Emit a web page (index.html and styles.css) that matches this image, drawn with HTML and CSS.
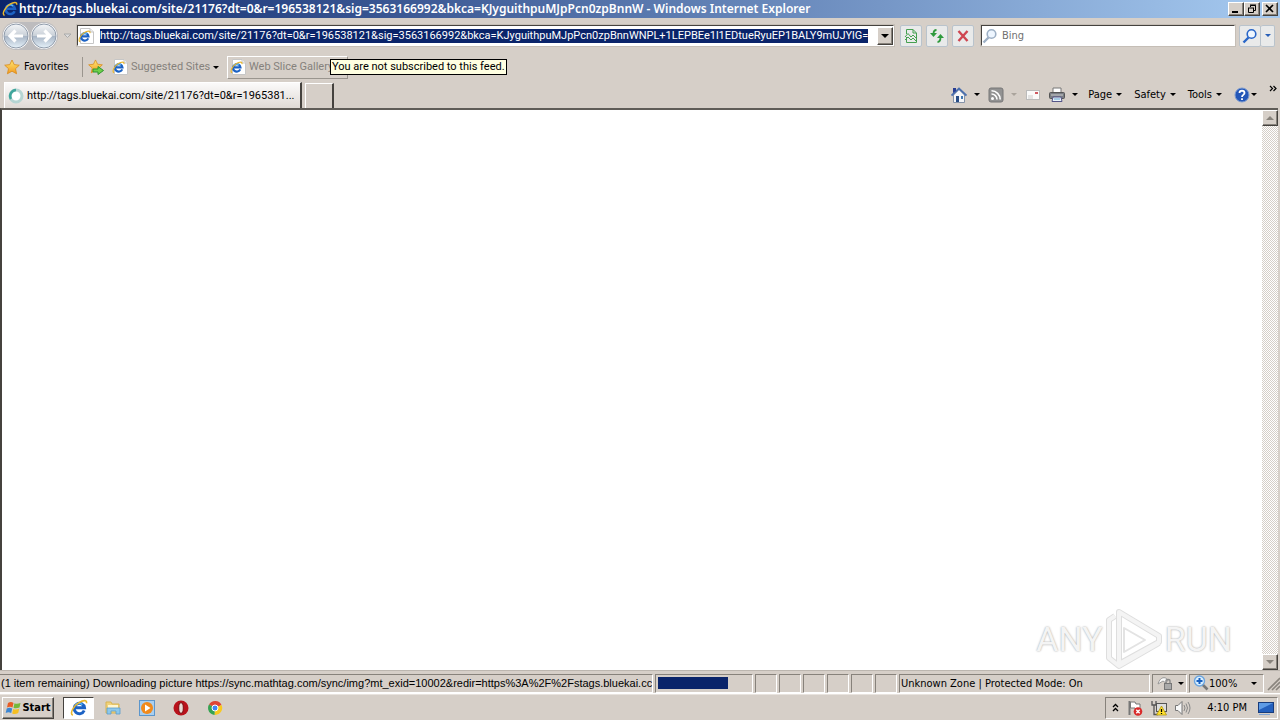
FILE: index.html
```html
<!DOCTYPE html>
<html lang="en">
<head>
<meta charset="utf-8">
<title>Windows Internet Explorer</title>
<link rel="stylesheet" href="styles.css">
</head>
<body>
<svg class="defs" aria-hidden="true">
  <defs>
    <linearGradient id="orb" x1="0" y1="0" x2="0" y2="1"><stop offset="0" stop-color="#f4f6f8"/><stop offset=".48" stop-color="#c9d0d8"/><stop offset=".52" stop-color="#a9b6c6"/><stop offset="1" stop-color="#e6f2fa"/></linearGradient>
    <linearGradient id="gold" x1="0" y1="0" x2="0" y2="1"><stop offset="0" stop-color="#ffe873"/><stop offset="1" stop-color="#f29a1f"/></linearGradient>
    <symbol id="e" viewBox="0 0 16 16">
      <path d="M12.6 10.2A4.6 4.6 0 1 1 12.900 7.800H5" fill="none" stroke="#1c62c4" stroke-width="2.600"/>
      <path d="M4.800 5.500A4.600 4.600 0 0 1 11 5" fill="none" stroke="#54b4f2" stroke-width="1.400"/>
      <path d="M2.500 14.500C-.5 13 3 6 8 3.200C11.500 1 15.500 .5 14.600 3.800" fill="none" stroke="#e9b72c" stroke-width="1.400"/>
    </symbol>
    <symbol id="page-e" viewBox="0 0 16 16">
      <path d="M2.500 .5H12L15.500 4V15.500H2.500Z" fill="#fff" stroke="#c6c6c6"/>
      <path d="M12 .5V4H15.500" fill="#eee" stroke="#c6c6c6"/>
      <use href="#e" x="0" y="2" width="13" height="13"/>
    </symbol>
    <symbol id="star" viewBox="0 0 16 16"><path d="M8 1L10.200 5.600L15.300 6.200L11.500 9.700L12.600 14.800L8 12.200L3.400 14.800L4.500 9.700L.7 6.200L5.800 5.600Z" fill="url(#gold)" stroke="#d88a1c" stroke-width=".8"/></symbol>
    <symbol id="lens" viewBox="0 0 16 16"><path d="M6.500 9.500L1.500 14.500" stroke="currentColor" stroke-width="2.400"/><circle cx="9.500" cy="6" r="4.300" fill="#eef6ff" stroke="currentColor" stroke-width="1.600"/></symbol>
  </defs>
</svg>

<header class="title-bar">
  <svg class="icon"><use href="#e"/></svg>
  <h1 class="title">http://tags.bluekai.com/site/21176?dt=0&amp;r=196538121&amp;sig=3563166992&amp;bkca=KJyguithpuMJpPcn0zpBnnW - Windows Internet Explorer</h1>
  <div class="window-buttons">
    <button class="win-button" aria-label="Minimize"><svg width="12" height="10"><path d="M2 8H8" stroke="#000" stroke-width="2"/></svg></button>
    <button class="win-button" aria-label="Restore"><svg width="12" height="10"><path d="M4.500 3V1.500H9.500V6.500H8M4 1H10M2 4H8M2.500 4V8.500H7.500V4" fill="none" stroke="#000"/></svg></button>
    <button class="win-button close" aria-label="Close"><svg width="12" height="10"><path d="M2 1L9 8M9 1L2 8" stroke="#000" stroke-width="1.600"/></svg></button>
  </div>
</header>

<nav class="nav-bar">
  <div class="travel">
    <button class="orb" aria-label="Back"><svg width="26" height="26" viewBox="0 0 26 26"><circle cx="13" cy="13" r="12" fill="url(#orb)" stroke="#8f9bab"/><path d="M20 13H7M12.500 7.500L7 13L12.500 18.500" fill="none" stroke="#fff" stroke-width="3.200"/></svg></button>
    <button class="orb" aria-label="Forward"><svg width="26" height="26" viewBox="0 0 26 26"><circle cx="13" cy="13" r="12" fill="url(#orb)" stroke="#8f9bab"/><path d="M6 13H19M13.500 7.500L19 13L13.500 18.500" fill="none" stroke="#fff" stroke-width="3.200"/></svg></button>
  </div>
  <button class="plain history" aria-label="Recent pages"><svg width="9" height="6"><path d="M1 1H8L4.500 4.500Z" fill="#ddd" stroke="#aaa"/></svg></button>
  <div class="address">
    <svg class="icon"><use href="#page-e"/></svg>
    <input class="address-input" type="text" aria-label="Address" value="http://tags.bluekai.com/site/21176?dt=0&amp;r=196538121&amp;sig=3563166992&amp;bkca=KJyguithpuMJpPcn0zpBnnWNPL+1LEPBEe1l1EDtueRyuEP1BALY9mUJYlG=">
    <button class="drop" aria-label="Show address list"><i class="caret big"></i></button>
  </div>
  <div class="tools">
    <button class="tool" aria-label="Compatibility view"><svg width="16" height="16"><path d="M3.500 1.500H10L13.500 5V14.500H3.500V9M3.500 6V1.500M10 1.500V5H13M2 9L5 5.500L8 9L10 7L14 11M2 12L5 9L8 12L10 10L13 13" fill="none" stroke="#45a050"/></svg></button>
    <button class="tool" aria-label="Refresh"><svg width="16" height="16"><path d="M7.500 2C5 2 4.500 4 4.500 6M8.500 14C11 14 11.500 12 11.500 9" fill="none" stroke="#2f9a3d" stroke-width="1.800"/><path d="M1 5H8L4.500 9ZM8 10H15L11.500 6Z" fill="#2f9a3d"/></svg></button>
    <button class="tool" aria-label="Stop"><svg width="16" height="16"><path d="M3.500 3L12.500 13M12.500 3L3.500 13" stroke="#cf4550" stroke-width="2.400"/></svg></button>
  </div>
  <div class="search"><svg class="icon pale"><use href="#lens"/></svg><input class="search-input" type="text" placeholder="Bing" aria-label="Search"></div>
  <div class="search-buttons">
    <button class="tool" aria-label="Search"><svg class="icon blue"><use href="#lens"/></svg></button>
    <button class="tool slim" aria-label="Search options"><i class="caret blue"></i></button>
  </div>
</nav>

<div class="favorites">
  <button class="plain fav"><svg class="icon"><use href="#star"/></svg>Favorites</button>
  <button class="plain add" aria-label="Add to favorites bar"><svg class="icon" viewBox="0 0 16 16"><use href="#star" width="15" height="15"/><path d="M5 10H10V7.500L15.500 11.500L10 15.500V13H5Z" fill="#6ed04a" stroke="#2f942e"/></svg></button>
  <button class="plain link suggested"><svg class="icon"><use href="#page-e"/></svg>Suggested Sites<i class="caret"></i></button>
  <div class="slice">
    <button class="plain link raised"><svg class="icon"><use href="#page-e"/></svg>Web Slice Gallery</button>
    <div class="tooltip" role="tooltip">You are not subscribed to this feed.</div>
  </div>
</div>

<div class="tab-row">
  <button class="tab"><svg class="icon" viewBox="0 0 16 16"><circle cx="8" cy="8" r="6" fill="#fff" stroke="#b5d5d3" stroke-width="3"/><path d="M8 2A6 6 0 0 0 3 11" fill="none" stroke="#3fa69c" stroke-width="2.600"/></svg><span class="tab-label">http://tags.bluekai.com/site/21176?dt=0&amp;r=1965381...</span></button>
  <button class="new-tab" aria-label="New tab"></button>
  <div class="commands">
    <button class="plain command" aria-label="Home"><svg class="icon" viewBox="0 0 16 16"><path d="M2.500 8V15.500H13.500V8L8 2.500Z" fill="#f5f6f8" stroke="#8593a8"/><path d="M.5 8.500L8 1.500L15.500 8.500" fill="none" stroke="#4a6fae" stroke-width="1.800"/><path d="M2 1H5V4L2 6Z" fill="#293e93"/><path d="M5 9H8V15H5Z" fill="#284d86"/><path d="M10 9H12V12H10Z" fill="#4179b4"/></svg><i class="caret"></i></button>
    <button class="plain command" aria-label="Feeds"><svg class="icon" viewBox="0 0 16 16"><rect x="1" y="1" width="14" height="14" rx="2" fill="#929292" stroke="#777"/><circle cx="4.500" cy="11.500" r="1.500" fill="#fff"/><path d="M3.500 7A5.500 5.500 0 0 1 9 12.500M3.500 3.800A8.700 8.700 0 0 1 12.200 12.500" fill="none" stroke="#fff" stroke-width="1.600"/></svg><i class="caret off"></i></button>
    <button class="plain command" aria-label="Read mail"><svg class="icon" viewBox="0 0 16 16"><rect x="1.500" y="3.500" width="13" height="9" fill="#fafafa" stroke="#bbb"/><path d="M10 5H13V7H10Z" fill="#cf5a62"/><path d="M3 9H8M3 11H8" stroke="#ccc"/></svg></button>
    <button class="plain command print" aria-label="Print"><svg class="icon" viewBox="0 0 16 16"><path d="M4 1H12V6H4Z" fill="#fff" stroke="#777"/><rect x=".5" y="5.500" width="15" height="6" rx="1" fill="#797d83" stroke="#555"/><path d="M2 8H14" stroke="#d0d0d0"/><path d="M4 10H12L13 14.500H3Z" fill="#e9f3fa" stroke="#558"/><path d="M5 12H11" stroke="#62a5d0"/></svg><i class="caret"></i></button>
    <button class="plain command word">Page<i class="caret"></i></button>
    <button class="plain command word">Safety<i class="caret"></i></button>
    <button class="plain command word">Tools<i class="caret"></i></button>
    <button class="plain command help" aria-label="Help"><svg class="icon" viewBox="0 0 16 16"><circle cx="8" cy="8" r="7" fill="#2457b8" stroke="#7c9bd0"/><path d="M5.500 6C5.500 3 10.500 3 10.500 6C10.500 8 8 7.800 8 10M8 11.200V13" fill="none" stroke="#fff" stroke-width="1.800"/></svg><i class="caret"></i></button>
    <button class="plain more" aria-label="More commands"><svg width="8" height="7"><path d="M1 1L3.500 3.500L1 6M4.500 1L7 3.500L4.500 6" fill="none" stroke="#000" stroke-width="1.200"/></svg></button>
  </div>
</div>

<main class="viewport">
  <div class="document"></div>
  <div class="scrollbar">
    <button class="scroll-button" aria-label="Scroll up"><i class="caret up gray"></i></button>
    <button class="scroll-button" aria-label="Scroll down"><i class="caret big gray"></i></button>
  </div>
  <div class="watermark">
    <span>ANY</span>
    <svg width="58" height="62" viewBox="0 0 58 62"><g fill="none" stroke-linejoin="round"><path d="M10 8L4 12V50L14 58L54 35M14 4L54 28V34L14 56Z" stroke="#dedede" stroke-width="6"/><path d="M10 8L4 12V50L14 58L54 35M14 4L54 28V34L14 56Z" stroke="#f4f4f4" stroke-width="4"/><path d="M19 20V44L40 32Z" fill="#fff" stroke="#e3e3e3" stroke-width="2"/></g></svg>
    <span>RUN</span>
  </div>
</main>

<footer class="status">
  <div class="pane message">(1 item remaining) Downloading picture https://sync.mathtag.com/sync/img?mt_exid=10002&amp;redir=https%3A%2F%2Fstags.bluekai.cc</div>
  <div class="pane progress" role="progressbar" aria-label="Loading"><div class="progress-fill"></div></div>
  <div class="pane cell"></div><div class="pane cell"></div><div class="pane cell"></div><div class="pane cell"></div><div class="pane cell"></div><div class="pane cell"></div>
  <div class="pane zone">Unknown Zone | Protected Mode: On</div>
  <button class="pane privacy" aria-label="Privacy"><svg class="icon" viewBox="0 0 16 16"><path d="M1 9C3 2 8 1 11 5L9 8L6 6Z" fill="#fafafa" stroke="#999"/><rect x="7.500" y="8.500" width="7" height="6" fill="#aaa" stroke="#777"/><path d="M9 8V6C9 4 13 4 13 6V8" fill="none" stroke="#888" stroke-width="1.400"/></svg><i class="caret"></i></button>
  <button class="pane zoom"><svg class="icon" viewBox="0 0 16 16"><path d="M9 9L14.500 14.500" stroke="#777" stroke-width="2.600"/><circle cx="6.500" cy="6" r="5" fill="#d9efff" stroke="#6ca5df" stroke-width="1.400"/><path d="M6.500 3V9M3.500 6H9.500" stroke="#175fc0" stroke-width="2"/></svg><span class="percent">100%</span><i class="caret"></i></button>
  <svg class="grip" width="14" height="16"><path d="M2 15L14 3M6 15L14 7M10 15L14 11" stroke="#8a857e" stroke-width="1.600"/></svg>
</footer>

<div class="taskbar">
  <button class="start"><svg class="icon" viewBox="0 0 16 16"><path d="M3 3Q6 1 8.500 3L7.500 7.500Q5 6 2 7.500Z" fill="#e85c25"/><path d="M9.500 3.300Q12 4.500 15.500 3L14.500 7.500Q11 9 8.500 7.800Z" fill="#75b83a"/><path d="M1.700 8.500Q4.500 7 7.200 8.500L6.200 13Q3.500 11.500 .7 13Z" fill="#3c86d3"/><path d="M8.200 9Q11 10.200 14.200 8.700L13.200 13Q10 14.800 7.200 13.400Z" fill="#f5bf22"/></svg>Start</button>
  <div class="launchers">
    <button class="task active" aria-label="Internet Explorer"><svg class="icon"><use href="#e"/></svg></button>
    <button class="task" aria-label="Explorer"><svg class="icon" viewBox="0 0 16 16"><path d="M1 2H6L7 4H14V13H1Z" fill="#f1d27a" stroke="#d8b452"/><path d="M3 5H13V10H3Z" fill="#fff6cf"/><path d="M2 8H15V14H11V11H6V14H2Z" fill="#8cc8ec" stroke="#5b9ccb" stroke-width=".8"/></svg></button>
    <button class="task" aria-label="Media Player"><svg class="icon" viewBox="0 0 16 16"><rect x=".5" y=".5" width="15" height="15" fill="#a9cff0" stroke="#5c96cc"/><circle cx="8" cy="8" r="6" fill="#f18a1c"/><path d="M6 4.500L11.500 8L6 11.500Z" fill="#fff"/></svg></button>
    <button class="task" aria-label="Opera"><svg class="icon" viewBox="0 0 16 16"><circle cx="8" cy="8" r="7.500" fill="#b8121b"/><ellipse cx="8" cy="8" rx="2.300" ry="5.300" fill="#e8dcd6" stroke="#7b0c12"/></svg></button>
    <button class="task" aria-label="Chrome"><svg class="icon" viewBox="0 0 16 16"><path d="M8 8L2 4.500A7 7 0 0 1 14.500 5Z" fill="#e04434"/><path d="M8 8L14.500 5A7 7 0 0 1 7.500 15Z" fill="#f8c921"/><path d="M8 8L7.500 15A7 7 0 0 1 2 4.500Z" fill="#36a352"/><circle cx="8" cy="8" r="3" fill="#4285f4" stroke="#fff"/></svg></button>
  </div>
  <div class="tray">
    <button class="plain" aria-label="Show hidden icons"><svg width="7" height="9"><path d="M1 4L3.500 1.500L6 4M1 8L3.500 5.500L6 8" fill="none" stroke="#000" stroke-width="1.300"/></svg></button>
    <svg class="icon" viewBox="0 0 16 16"><path d="M2.500 1V15" stroke="#777" stroke-width="2"/><path d="M3.500 2H8L9 4H13V10H9L8 8H3.500Z" fill="#fff" stroke="#777"/><circle cx="11" cy="11.500" r="4.300" fill="#d92a2a"/><path d="M9.300 9.800L12.700 13.200M12.700 9.800L9.300 13.200" stroke="#fff" stroke-width="1.400"/></svg>
    <svg class="icon" viewBox="0 0 16 16"><rect x="5.500" y="3.500" width="10" height="8" fill="#ddd" stroke="#555"/><path d="M1 1V5H5V1M3 5V14.500H7" fill="none" stroke="#555" stroke-width="1.300"/><path d="M10.500 6L15.500 15H5.500Z" fill="#ffe02d" stroke="#a98c00" stroke-width=".7"/><path d="M10.500 9V12M10.500 13V14" stroke="#000" stroke-width="1.300"/></svg>
    <svg class="icon" viewBox="0 0 16 16"><path d="M.5 5.500H3L7 1.500V14.500L3 10.500H.5Z" fill="#f8f8f8" stroke="#777"/><path d="M9 5Q11 8 9 11M11 3.500Q14 8 11 12.500M13 2Q17 8 13 14" fill="none" stroke="#888"/></svg>
    <time class="clock">4:10 PM</time>
    <svg class="icon" viewBox="0 0 16 16"><rect x=".5" y="2.500" width="15" height="10" fill="#2460bd" stroke="#183c7c"/><path d="M1 3H15L1 10Z" fill="#5e9be5"/><path d="M1 14.500H12" stroke="#81a5d5"/></svg>
  </div>
</div>
</body>
</html>
```
FILE: styles.css
```css
:root {
  --face: #d6cfc8;
  --navy: #0a246a;
  --shade: #87827b;
  --dark: #45423e;
}
* { box-sizing: border-box; }
body {
  margin: 0;
  height: 100vh;
  display: flex;
  flex-direction: column;
  background: var(--face);
  color: #000;
  font: 11px/14px "DejaVu Sans Condensed", "DejaVu Sans", sans-serif;
  overflow: hidden;
}
button, input { font: inherit; color: inherit; margin: 0; padding: 0; border: 0; }
button { display: flex; align-items: center; justify-content: center; background: var(--face); flex: none; white-space: nowrap; }
svg { display: block; flex: none; }
.defs { position: absolute; width: 0; height: 0; }
.icon { width: 16px; height: 16px; }
.plain { background: none; }
.caret { flex: none; border: 3px solid transparent; border-top-color: #000; border-bottom: 0; }
.caret.big { border-width: 4px 4px 0; }
.caret.off { border-top-color: #aaa49c; }
.caret.gray { border-top-color: #88837c; }
.caret.blue { border-top-color: #285fb8; }
.caret.up { border: 4px solid transparent; border-bottom-color: #88837c; border-top: 0; }

.title-bar {
  flex: none;
  height: 18px;
  display: flex;
  align-items: center;
  gap: 1px;
  padding: 0 2px;
  background: linear-gradient(90deg, #0a246a, #a6caf0);
  color: #fff;
}
.title { flex: 1; min-width: 0; margin: 0; font: 600 12px/16px "Noto Sans", sans-serif; white-space: nowrap; overflow: hidden; }
.window-buttons { display: flex; }
.win-button, .drop, .scroll-button {
  border: 1px solid;
  border-color: #fff var(--dark) var(--dark) #fff;
  box-shadow: inset -1px -1px var(--shade);
}
.win-button { width: 16px; height: 14px; }
.close { margin-left: 2px; }

.nav-bar { flex: none; height: 35px; display: flex; align-items: center; padding: 0 5px 0 2px; }
.travel { display: flex; gap: 2px; padding: 1px; border-radius: 15px; background: #bdbcbe; }
.orb { border-radius: 50%; background: #fff; }
.history { width: 19px; }
.address, .search {
  height: 21px;
  display: flex;
  align-items: center;
  background: #fff;
  border: 1px solid;
  border-color: var(--dark) #fff #fff var(--dark);
  box-shadow: 0 0 0 1px #c5beb6;
}
.address { flex: 1; min-width: 0; gap: 6px; }
.address-input, .link, .tooltip { font-family: Roboto, sans-serif; }
.message { font-family: "Liberation Sans", Arial, sans-serif; }
.address-input { field-sizing: content; min-width: 0; height: 14px; background: var(--navy); color: #fff; }
.drop { width: 16px; height: 18px; margin-left: auto; }
.tools { display: flex; gap: 4px; margin: 0 7px 0 6px; }
.tool { width: 22px; height: 22px; border: 1px solid #b9c3cc; border-radius: 2px; background: #e9eaea; }
.search { width: 254px; gap: 4px; }
.search-input { flex: 1; min-width: 0; background: none; outline: 0; }
.search-input::placeholder { color: #707070; opacity: 1; }
.pale { color: #9eb0c5; }
.blue { color: #2966c8; }
.search-buttons { display: flex; margin-left: 4px; }
.slim { width: 14px; border-left: 0; }

.favorites { flex: none; height: 28px; display: flex; align-items: center; padding-left: 4px; }
.fav { gap: 4px; width: 79px; height: 20px; justify-content: flex-start; border-right: 1px solid #9a958e; }
.add { margin: 0 8px 0 5px; }
.link { gap: 3px; color: #85817c; }
.suggested { width: 107px; justify-content: flex-start; }
.slice { position: relative; margin-left: 8px; }
.raised { width: 121px; height: 23px; justify-content: flex-start; padding-left: 2px; border: 1px solid; border-color: #fff #9a958e #9a958e #fff; }
.tooltip { position: absolute; left: 103px; top: 3px; padding: 0 1px; border: 1px solid #000; background: #ffffe1; white-space: nowrap; }

.tab-row { flex: none; height: 27px; display: flex; align-items: flex-end; padding: 0 3px 0 4px; }
.tab { width: 298px; height: 26px; gap: 3px; padding-left: 3px; justify-content: flex-start; background: linear-gradient(#fbfafa, #dfdad5); border: 1px solid #fff; border-right: 2px solid var(--dark); border-bottom: 0; }
.tab-label { overflow: hidden; font-family: Roboto, sans-serif; }
.new-tab { width: 29px; height: 25px; margin: 0 auto 0 3px; border: 1px solid #fff; border-right: 2px solid var(--dark); border-bottom: 0; }
.commands { display: flex; align-items: center; align-self: stretch; }
.command { gap: 7px; margin-right: 8px; }
.print { margin-right: 10px; }
.command.word { gap: 4px; margin-right: 12px; }
.command.help { gap: 1px; margin-right: 12px; }
.more { align-self: flex-start; margin-top: 4px; }

.viewport { flex: 1; min-height: 0; position: relative; display: flex; margin-right: 2px; background: #fff; border: 1px solid var(--dark); border-width: 2px 0 0 2px; border-top-color: #5f5c57; }
.document { flex: 1; }
.scrollbar { width: 16px; display: flex; flex-direction: column; justify-content: space-between; background: repeating-conic-gradient(#fff 0 25%, #d6cfc8 0 50%) 0 0 / 2px 2px; }
.scroll-button { width: 16px; height: 16px; }
.watermark {
  position: absolute;
  right: 46px;
  bottom: 0;
  display: flex;
  align-items: center;
  gap: 2px;
  color: #f4f4f4;
  font: 34px/42px Roboto, sans-serif;
  text-shadow: 0 0 2px #999;
}

.status { flex: none; height: 24px; display: flex; align-items: center; gap: 2px; padding-top: 2px; border-top: 1px solid #bcb6af; border-bottom: 1px solid #fff; }
.pane { flex: none; height: 19px; padding-left: 1px; line-height: 17px; white-space: nowrap; overflow: hidden; border: 1px solid; border-color: var(--shade) #fff #fff var(--shade); }
.message { flex: 1; min-width: 0; border-left: 0; }
.progress { width: 98px; padding: 2px; }
.progress-fill { width: 76%; height: 12px; background: var(--navy); }
.cell { width: 22px; }
.zone { width: 251px; }
.privacy { width: 35px; gap: 5px; }
.zoom { width: 75px; padding-left: 3px; justify-content: flex-start; }
.percent { flex: 1; text-align: left; }
.zoom .caret { margin-right: 6px; }

.taskbar { flex: none; height: 26px; display: flex; align-items: center; padding: 0 2px; border-top: 1px solid #e8e3de; }
.start { width: 52px; height: 22px; gap: 1px; font-weight: bold; border: 1px solid; border-color: #fff var(--dark) var(--dark) #fff; box-shadow: inset -1px -1px var(--shade); }
.launchers { display: flex; gap: 3px; margin-left: 9px; }
.task { width: 31px; height: 22px; background: none; }
.task.active { background: #fff; border: 1px solid; border-color: var(--dark) #fff #fff var(--dark); }
.active .icon { width: 18px; height: 18px; }
.tray { display: flex; align-items: center; gap: 8px; height: 22px; margin-left: auto; padding: 0 3px 0 6px; border: 1px solid; border-color: var(--shade) #fff #fff var(--shade); }
.clock { margin: 0 3px 0 8px; }
```
